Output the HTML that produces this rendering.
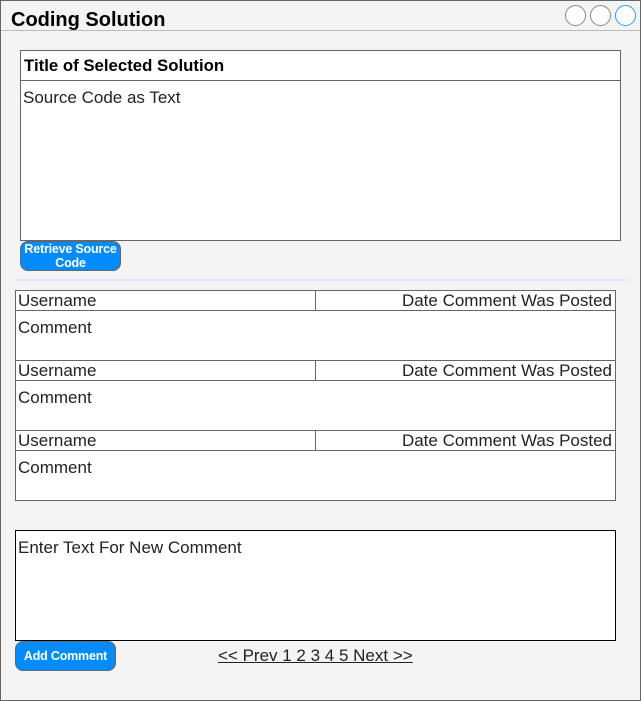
<!DOCTYPE html>
<html><head><style>
*{margin:0;padding:0;box-sizing:border-box}
body{width:641px;height:701px;background:#fff;font-family:"Liberation Sans",Arial,sans-serif;position:relative;overflow:hidden}
.a{position:absolute}
.win{left:0;top:0;width:641px;height:701px;border:1px solid #666;background:#f4f4f4}
.box{background:#fff;border:1px solid #666}
.t{font-size:17px;color:#222;white-space:nowrap;line-height:18px}
.btn{background:#008cff;border:1px solid #666;border-radius:8px;color:#fff;font-weight:bold;font-size:12.5px;text-align:center;display:flex;align-items:center;justify-content:center;line-height:14px;letter-spacing:-0.2px}
.c{width:21px;height:21px;border-radius:50%;border:1px solid #888;background:#fff;top:5px}
</style></head><body>
<div class="a win"></div>
<div class="a" style="left:1px;top:30px;width:639px;height:1px;background:#bbb"></div>
<div class="a t" style="left:11px;top:10px;font-size:20px;font-weight:bold;color:#000;line-height:20px">Coding Solution</div>
<div class="a c" style="left:565px"></div>
<div class="a c" style="left:590px"></div>
<div class="a c" style="left:615px;border-color:#3399ff"></div>

<div class="a box" style="left:20px;top:50px;width:601px;height:191px"></div>
<div class="a" style="left:20px;top:80px;width:601px;height:1px;background:#666"></div>
<div class="a t" style="left:24px;top:57px;font-weight:bold;font-size:16.8px;color:#000">Title of Selected Solution</div>
<div class="a t" style="left:23px;top:89px">Source Code as Text</div>
<div class="a btn" style="left:20px;top:241px;width:101px;height:30px">Retrieve Source<br>Code</div>
<div class="a" style="left:15px;top:279px;width:615px;height:2px;background:#dcebfa"></div>

<div class="a box" style="left:15px;top:290px;width:601px;height:211px"></div>
<div class="a" style="left:15px;top:310px;width:601px;height:1px;background:#666"></div>
<div class="a" style="left:15px;top:360px;width:601px;height:1px;background:#666"></div>
<div class="a" style="left:15px;top:380px;width:601px;height:1px;background:#666"></div>
<div class="a" style="left:15px;top:430px;width:601px;height:1px;background:#666"></div>
<div class="a" style="left:15px;top:450px;width:601px;height:1px;background:#666"></div>
<div class="a" style="left:315px;top:290px;width:1px;height:20px;background:#666"></div>
<div class="a" style="left:315px;top:360px;width:1px;height:20px;background:#666"></div>
<div class="a" style="left:315px;top:430px;width:1px;height:20px;background:#666"></div>
<div class="a t" style="left:18px;top:292px">Username</div>
<div class="a t" style="right:29px;top:292px">Date Comment Was Posted</div>
<div class="a t" style="left:18px;top:319px">Comment</div>
<div class="a t" style="left:18px;top:362px">Username</div>
<div class="a t" style="right:29px;top:362px">Date Comment Was Posted</div>
<div class="a t" style="left:18px;top:389px">Comment</div>
<div class="a t" style="left:18px;top:432px">Username</div>
<div class="a t" style="right:29px;top:432px">Date Comment Was Posted</div>
<div class="a t" style="left:18px;top:459px">Comment</div>

<div class="a box" style="left:15px;top:530px;width:601px;height:111px;border-color:#000"></div>
<div class="a t" style="left:18px;top:539px">Enter Text For New Comment</div>
<div class="a btn" style="left:15px;top:641px;width:101px;height:30px">Add Comment</div>
<div class="a t" style="left:218px;top:647px;text-decoration:underline">&lt;&lt; Prev 1 2 3 4 5 Next &gt;&gt;</div>
</body></html>
